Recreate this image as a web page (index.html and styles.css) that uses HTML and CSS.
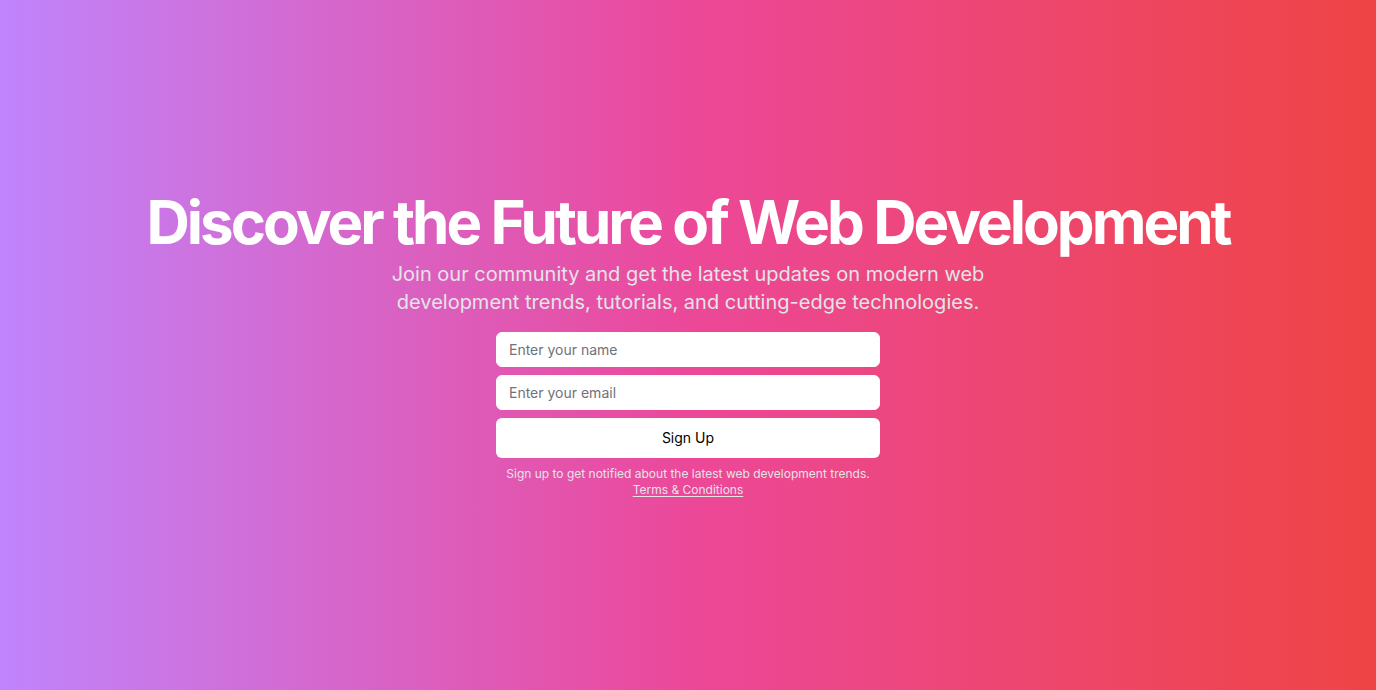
FILE: index.html
```html
<!DOCTYPE html>
<html lang="en">
<head>
<meta charset="utf-8">
<title>Discover the Future of Web Development</title>
<link rel="stylesheet" href="styles.css">
</head>
<body>
<section class="hero">
  <div class="content">
    <div class="intro">
      <h1 class="title">Discover the Future of Web Development</h1>
      <p class="lead">Join our community and get the latest updates on modern web development trends, tutorials, and cutting-edge technologies.</p>
    </div>
    <div class="signup">
      <form class="form">
        <input class="field" type="text" placeholder="Enter your name">
        <input class="field" type="email" placeholder="Enter your email">
        <button class="btn" type="submit">Sign Up</button>
      </form>
      <p class="note">Sign up to get notified about the latest web development trends.<br><a class="link" href="#">Terms &amp; Conditions</a></p>
    </div>
  </div>
</section>
</body>
</html>
```
FILE: styles.css
```css
* { box-sizing: border-box; }
html, body { margin: 0; padding: 0; }
body {
  font-family: Inter, "Noto Sans", sans-serif;
}
.hero {
  width: 100%;
  height: 690px;
  background: linear-gradient(to right, #c084fc, #ec4899, #ef4444);
  display: flex;
  align-items: center;
  justify-content: center;
}
.content {
  display: flex;
  flex-direction: column;
  align-items: center;
  gap: 16px;
  text-align: center;
  padding: 0 16px;
}
.intro {
  display: flex;
  flex-direction: column;
  align-items: center;
  gap: 8px;
}
.title {
  margin: 0;
  font-size: 60px;
  line-height: 1;
  font-weight: 700;
  letter-spacing: -0.05em;
  color: #ffffff;
}
.lead {
  margin: 0;
  max-width: 600px;
  font-size: 20px;
  line-height: 28px;
  color: #e4e4e7;
}
.signup {
  width: 384px;
  display: flex;
  flex-direction: column;
  gap: 8px;
}
.form {
  display: flex;
  flex-direction: column;
  gap: 8px;
  margin: 0;
}
.field {
  height: 35px;
  width: 100%;
  border: 1px solid #ffffff;
  border-radius: 6px;
  background: #ffffff;
  padding: 0 12px;
  font-family: inherit;
  font-size: 14px;
  color: #111;
  outline: none;
}
.field::placeholder { color: #71717a; }
.btn {
  height: 40px;
  width: 100%;
  border: none;
  border-radius: 6px;
  background: #ffffff;
  color: #000000;
  font-family: inherit;
  font-size: 14px;
  font-weight: 400;
  padding: 0 0 1px;
  cursor: pointer;
}
.note {
  margin: 0;
  font-size: 12px;
  line-height: 16px;
  color: #e4e4e7;
}
.link {
  color: #e4e4e7;
  text-decoration: underline;
  text-underline-offset: 2px;
}
```
